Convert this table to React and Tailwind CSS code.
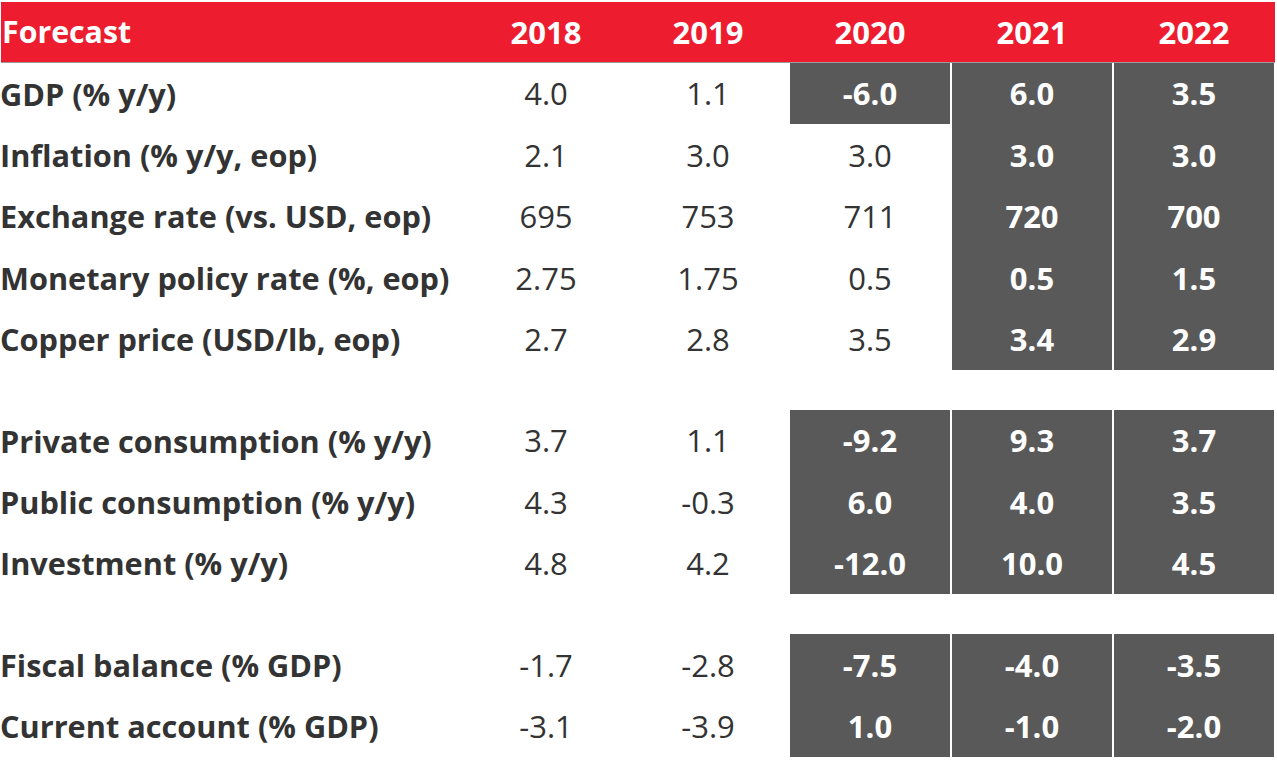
import React from "react";

const years = ["2018", "2019", "2020", "2021", "2022"];

const blocks = [
  [
    { label: "GDP (% y/y)", values: ["4.0", "1.1", "-6.0", "6.0", "3.5"], dark: [0, 0, 1, 1, 1] },
    { label: "Inflation (% y/y, eop)", values: ["2.1", "3.0", "3.0", "3.0", "3.0"], dark: [0, 0, 0, 1, 1] },
    { label: "Exchange rate (vs. USD, eop)", values: ["695", "753", "711", "720", "700"], dark: [0, 0, 0, 1, 1] },
    { label: "Monetary policy rate (%, eop)", values: ["2.75", "1.75", "0.5", "0.5", "1.5"], dark: [0, 0, 0, 1, 1] },
    { label: "Copper price (USD/lb, eop)", values: ["2.7", "2.8", "3.5", "3.4", "2.9"], dark: [0, 0, 0, 1, 1] },
  ],
  [
    { label: "Private consumption (% y/y)", values: ["3.7", "1.1", "-9.2", "9.3", "3.7"], dark: [0, 0, 1, 1, 1] },
    { label: "Public consumption (% y/y)", values: ["4.3", "-0.3", "6.0", "4.0", "3.5"], dark: [0, 0, 1, 1, 1] },
    { label: "Investment (% y/y)", values: ["4.8", "4.2", "-12.0", "10.0", "4.5"], dark: [0, 0, 1, 1, 1] },
  ],
  [
    { label: "Fiscal balance (% GDP)", values: ["-1.7", "-2.8", "-7.5", "-4.0", "-3.5"], dark: [0, 0, 1, 1, 1] },
    { label: "Current account (% GDP)", values: ["-3.1", "-3.9", "1.0", "-1.0", "-2.0"], dark: [0, 0, 1, 1, 1] },
  ],
];

const Row = ({ row }) => (
  <div className="grid grid-cols-[463px_repeat(5,160px)] gap-x-[2px] h-[61.4px]">
    <div className="flex items-center text-[30.7px] font-bold text-[#333333] whitespace-nowrap -ml-[1px]">
      {row.label}
    </div>
    {row.values.map((v, i) =>
      row.dark[i] ? (
        <div key={i} className="flex items-center justify-center bg-[#595959] text-white font-bold text-[31px]">
          {v}
        </div>
      ) : (
        <div key={i} className="flex items-center justify-center text-[#333333] text-[31px]">
          {v}
        </div>
      )
    )}
  </div>
);

const App = () => {
  return (
    <div className="w-[1277px] h-[765px] bg-white pl-[1px] pt-[2px] font-['Open_Sans',sans-serif]">
      <div className="grid grid-cols-[463px_repeat(5,160px)] gap-x-[2px] h-[61px] bg-[#ed1c2e] border-b border-[#9a9a9a] w-[1274px] text-white font-bold text-[31px]">
        <div className="flex items-center pl-[1px] text-[30.3px]">Forecast</div>
        {years.map((y) => (
          <div key={y} className="flex items-center justify-center">
            {y}
          </div>
        ))}
      </div>

      <div className="flex flex-col gap-[40px]">
        {blocks.map((block, b) => (
          <div key={b} className="flex flex-col">
            {block.map((row) => (
              <Row key={row.label} row={row} />
            ))}
          </div>
        ))}
      </div>
    </div>
  );
};

export default App;
